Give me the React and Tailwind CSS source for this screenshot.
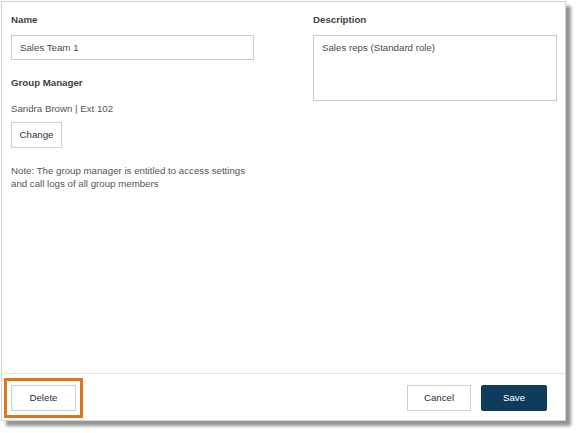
import React from "react";

const labelCls = "font-bold leading-[13px] text-[#3f3f3f]";
const btnCls =
  "h-[26px] border border-[#cfcfcf] bg-white text-[#1e3347] leading-[24px] text-center";

export default function App() {
  return (
    <div
      className="w-[578px] h-[433px] bg-white pt-[1px] pl-[1px] text-[9.7px] text-[#555]"
      style={{ fontFamily: '"Liberation Sans", Arial, sans-serif' }}
    >
      <div className="w-[565px] h-[420px] bg-white border border-[#d2d2d2] flex flex-col shadow-[5px_5px_3px_rgba(0,0,0,0.42)]">
        {/* form */}
        <div className="flex-1 flex gap-[59px] pl-[9px] pt-[11px]">
          <div className="w-[243px] flex flex-col">
            <div className={labelCls}>Name</div>
            <div className="mt-[9px] h-[25px] border border-[#cccccc] pl-[8px] leading-[23px] text-[#4a4a4a]">
              Sales Team 1
            </div>
            <div className={`${labelCls} mt-[16px]`}>Group Manager</div>
            <div className="mt-[13px] leading-[13px]">Sandra Brown | Ext 102</div>
            <button className={`${btnCls} mt-[7px] w-[51px] h-[25px] leading-[23px]`}>Change</button>
            <p className="mt-[16px] leading-[13px]">
              Note: The group manager is entitled to access settings
              <br />
              and call logs of all group members
            </p>
          </div>
          <div className="w-[244px] flex flex-col">
            <div className={labelCls}>Description</div>
            <div className="mt-[9px] h-[66px] border border-[#cccccc] pl-[8px] pt-[5px] leading-[13px] text-[#4a4a4a]">
              Sales reps (Standard role)
            </div>
          </div>
        </div>

        {/* footer */}
        <div className="h-[47px] border-t border-[#e3e3e3] flex items-start justify-between pl-[9px] pr-[18px] pt-[11px]">
          <button
            className={`${btnCls} w-[65px] outline-[3px] outline-solid outline-[#d9771c] outline-offset-[4px]`}
          >
            Delete
          </button>
          <div className="flex gap-[10px]">
            <button className={`${btnCls} w-[64px]`}>Cancel</button>
            <button className="h-[26px] w-[66px] bg-[#0f3b5c] text-white leading-[26px] text-center rounded-[2px]">
              Save
            </button>
          </div>
        </div>
      </div>
    </div>
  );
}
